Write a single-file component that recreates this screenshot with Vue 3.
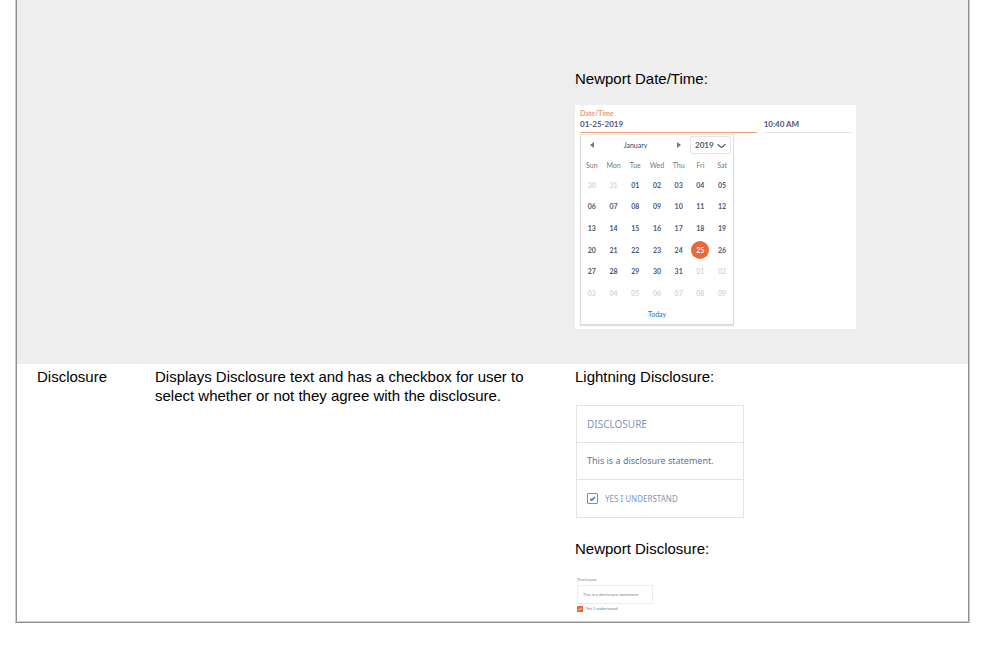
<script setup>
import { ref } from 'vue'

const dayNames = ['Sun', 'Mon', 'Tue', 'Wed', 'Thu', 'Fri', 'Sat']
const two = (n) => String(n).padStart(2, '0')
const start = new Date(2018, 11, 30)
const weeks = Array.from({ length: 6 }, (_, w) =>
  Array.from({ length: 7 }, (_, d) => {
    const date = new Date(start.getFullYear(), start.getMonth(), start.getDate() + w * 7 + d)
    return { label: two(date.getDate()), day: date.getDate(), outside: date.getMonth() !== 0 }
  })
)
const selected = ref(25)
const date = ref('01-25-2019')
const time = ref('10:40 AM')
const year = ref('2019')
const agreed = ref(true)
const understood = ref(true)
</script>

<template>
  <main class="page">
    <div class="frame">
      <table class="components">
        <colgroup>
          <col class="col-name" />
          <col class="col-text" />
          <col />
        </colgroup>
        <tbody>
          <tr class="row-date">
            <td></td>
            <td></td>
            <td>
              <p class="caption">Newport Date/Time:</p>
              <section class="date-card">
                <div class="fields">
                  <div class="field field-date">
                    <label for="date">Date/Time</label>
                    <input id="date" v-model="date" type="text" />
                  </div>
                  <div class="field field-time">
                    <input id="time" v-model="time" type="text" aria-label="Time" />
                  </div>
                </div>
                <div class="picker">
                  <div class="picker-head">
                    <button type="button" class="arrow" aria-label="Previous month">
                      <svg viewBox="0 0 4 6" width="4" height="6"><path d="M4 0v6L0 3z" fill="#777" /></svg>
                    </button>
                    <span class="month">January</span>
                    <button type="button" class="arrow" aria-label="Next month">
                      <svg viewBox="0 0 4 6" width="4" height="6"><path d="M0 0v6l4-3z" fill="#777" /></svg>
                    </button>
                    <div class="year">
                      <select v-model="year" aria-label="Year">
                        <option>2019</option>
                      </select>
                      <svg viewBox="0 0 9 6" width="9" height="6"><path d="M1 1.5C2.500 3 3.500 4 4.500 4.500C5.500 4 6.500 3 8 1.500" fill="none" stroke="#4a5878" stroke-width="1.100" stroke-linecap="round" /></svg>
                    </div>
                  </div>
                  <table class="days">
                    <thead>
                      <tr><th v-for="name in dayNames" :key="name" scope="col">{{ name }}</th></tr>
                    </thead>
                    <tbody>
                      <tr v-for="(week, w) in weeks" :key="w">
                        <td v-for="(d, i) in week" :key="i">
                          <button
                            type="button"
                            :class="{ outside: d.outside, selected: !d.outside && d.day === selected }"
                            @click="!d.outside && (selected = d.day)"
                          >{{ d.label }}</button>
                        </td>
                      </tr>
                    </tbody>
                  </table>
                  <button type="button" class="today">Today</button>
                </div>
              </section>
            </td>
          </tr>
          <tr class="row-disclosure">
            <td>Disclosure</td>
            <td>Displays Disclosure text and has a checkbox for user to select whether or not they agree with the disclosure.</td>
            <td>
              <p class="caption">Lightning Disclosure:</p>
              <section class="lightning">
                <h2>DISCLOSURE</h2>
                <p>This is a disclosure statement.</p>
                <label>
                  <span class="box">
                    <input v-model="agreed" type="checkbox" />
                    <svg v-if="agreed" viewBox="0 0 7 7" width="7" height="7"><path d="M1.300 3.800l1.500 1.400L5.800 2" fill="none" stroke="#2f6fc4" stroke-width="1.500" /></svg>
                  </span>
                  YES I UNDERSTAND
                </label>
              </section>
              <p class="caption">Newport Disclosure:</p>
              <section class="newport">
                <h2>Disclosure</h2>
                <p>This is a disclosure statement.</p>
                <label>
                  <span class="box">
                    <input v-model="understood" type="checkbox" />
                    <svg v-if="understood" viewBox="0 0 6 6" width="6" height="6"><path d="M1.500 3l1 1L4.500 2" fill="none" stroke="#fff" stroke-width="0.800" /></svg>
                  </span>
                  Yes I understand
                </label>
              </section>
            </td>
          </tr>
        </tbody>
      </table>
    </div>
  </main>
</template>

<style>
html,
body {
  background: #fff;
}
</style>

<style scoped>
* {
  box-sizing: border-box;
}
.page {
  padding: 0 36px 28px 15px;
  color: #000;
  font: 15px/19px "Liberation Sans", Arial, sans-serif;
}
.frame {
  border: solid #ccc;
  border-width: 0 1px 1px;
  border-bottom-color: #909090;
}
.components {
  width: 100%;
  table-layout: fixed;
  border: solid #909090;
  border-width: 0 1px 1px;
  border-bottom-color: #ccc;
  border-spacing: 0;
}
.col-name {
  width: 118px;
}
.col-text {
  width: 420px;
}
.components > tbody > tr > td {
  padding: 3px 20px 0;
  vertical-align: top;
}
.components .row-date {
  background: #eee;
}
.components .row-date > td:last-child {
  padding-top: 69px;
  padding-bottom: 35px;
}
.components .row-disclosure > td:last-child {
  padding-bottom: 9px;
}
p,
h2 {
  margin: 0;
}
button,
input,
select {
  margin: 0;
  padding: 0;
  border: 0;
  background: none;
  color: inherit;
  font: inherit;
  border-radius: 0;
}
button {
  cursor: pointer;
}
svg {
  display: block;
}

.date-card {
  width: 281px;
  height: 224px;
  margin-top: 17px;
  padding: 4px 4px 0 5px;
  background: #fff;
  color: #4a5878;
  font-family: Lato, sans-serif;
}
.fields {
  display: flex;
  align-items: flex-end;
  gap: 7px;
}
.field {
  display: flex;
  flex-direction: column;
  border-bottom: 1px solid #e4e4e4;
}
.field label {
  color: #ec9a75;
  font-size: 7px;
  font-weight: 700;
  line-height: 8px;
}
.field input {
  width: 100%;
  height: 15px;
  padding-bottom: 2px;
  font-size: 8px;
  font-weight: 700;
  line-height: 13px;
  outline: none;
}
.field-date {
  flex: 2;
  border-color: #f0a17e;
}
.field-time {
  flex: 1;
}
.picker {
  width: 154px;
  margin-top: 1px;
  border: 1px solid #ddd;
  border-top-color: #e6e6e6;
  box-shadow: 0 1px 1px #ddd;
  font-size: 7px;
  line-height: 10px;
}
.picker-head {
  display: grid;
  grid-template-columns: 22px 65px 22px 41px;
  align-items: center;
  height: 20px;
}
.arrow {
  display: grid;
  place-items: center;
  height: 12px;
}
.month {
  text-align: center;
  font-weight: 400;
  color: #33456c;
}
.year {
  position: relative;
  height: 18px;
  border: 1px solid #e4e4e4;
  border-radius: 2px;
}
.year select {
  display: block;
  width: 100%;
  height: 16px;
  padding-left: 4px;
  appearance: none;
  font-size: 8px;
  font-weight: 700;
}
.year svg {
  position: absolute;
  right: 4px;
  top: 6px;
  pointer-events: none;
}
.days {
  width: 100%;
  table-layout: fixed;
  border-spacing: 0;
  text-align: center;
}
.days th {
  height: 19px;
  padding: 0;
  color: #777;
  font-weight: 400;
}
.days tbody {
  height: 130px;
}
.days td {
  height: 21px;
  padding: 0;
}
.days td button {
  display: block;
  width: 18px;
  height: 18px;
  margin: 0 auto;
  border-radius: 50%;
  font-weight: 700;
}
.days td .outside {
  color: #d6d6d6;
}
.days td .selected {
  background: #e66a38;
  color: #fff;
}
.today {
  display: block;
  width: 100%;
  height: 20px;
  color: #2a6fc0;
}

.lightning {
  width: 168px;
  margin: 19px 0 21px 1px;
  border: 1px solid #e2e4e6;
  color: #5f7596;
  font-family: "Noto Sans", sans-serif;
}
.lightning > * {
  display: flex;
  align-items: center;
  height: 38px;
  padding-left: 10px;
  font-size: 9px;
}
.lightning > * + * {
  border-top: 1px solid #e2e4e6;
}
.lightning h2 {
  height: 36px;
  font-size: 10px;
  font-weight: 400;
  color: #7f98b6;
}
.lightning p {
  height: 37px;
  padding-bottom: 1px;
}
.lightning label {
  gap: 7px;
  font-size: 8px;
  color: #7f98b6;
}
.box {
  position: relative;
  display: grid;
  flex: none;
  place-items: center;
}
.box input {
  position: absolute;
  inset: 0;
  appearance: none;
}
.box svg {
  position: relative;
  pointer-events: none;
}
.lightning .box {
  width: 11px;
  height: 11px;
  border: 1px solid #7590b5;
  border-radius: 1px;
}

.newport {
  width: 76px;
  margin: 19px 0 0 2px;
  color: #66758f;
  font: 4px/6px "Noto Sans", sans-serif;
}
.newport h2 {
  font-size: 4px;
  font-weight: 400;
}
.newport p {
  margin: 2px 0;
  padding: 6px 5px 5px;
  border: 1px solid #ececec;
  border-radius: 1px;
}
.newport label {
  display: flex;
  align-items: center;
  gap: 3px;
}
.newport .box {
  width: 6px;
  height: 6px;
  background: #e66a38;
}
</style>
